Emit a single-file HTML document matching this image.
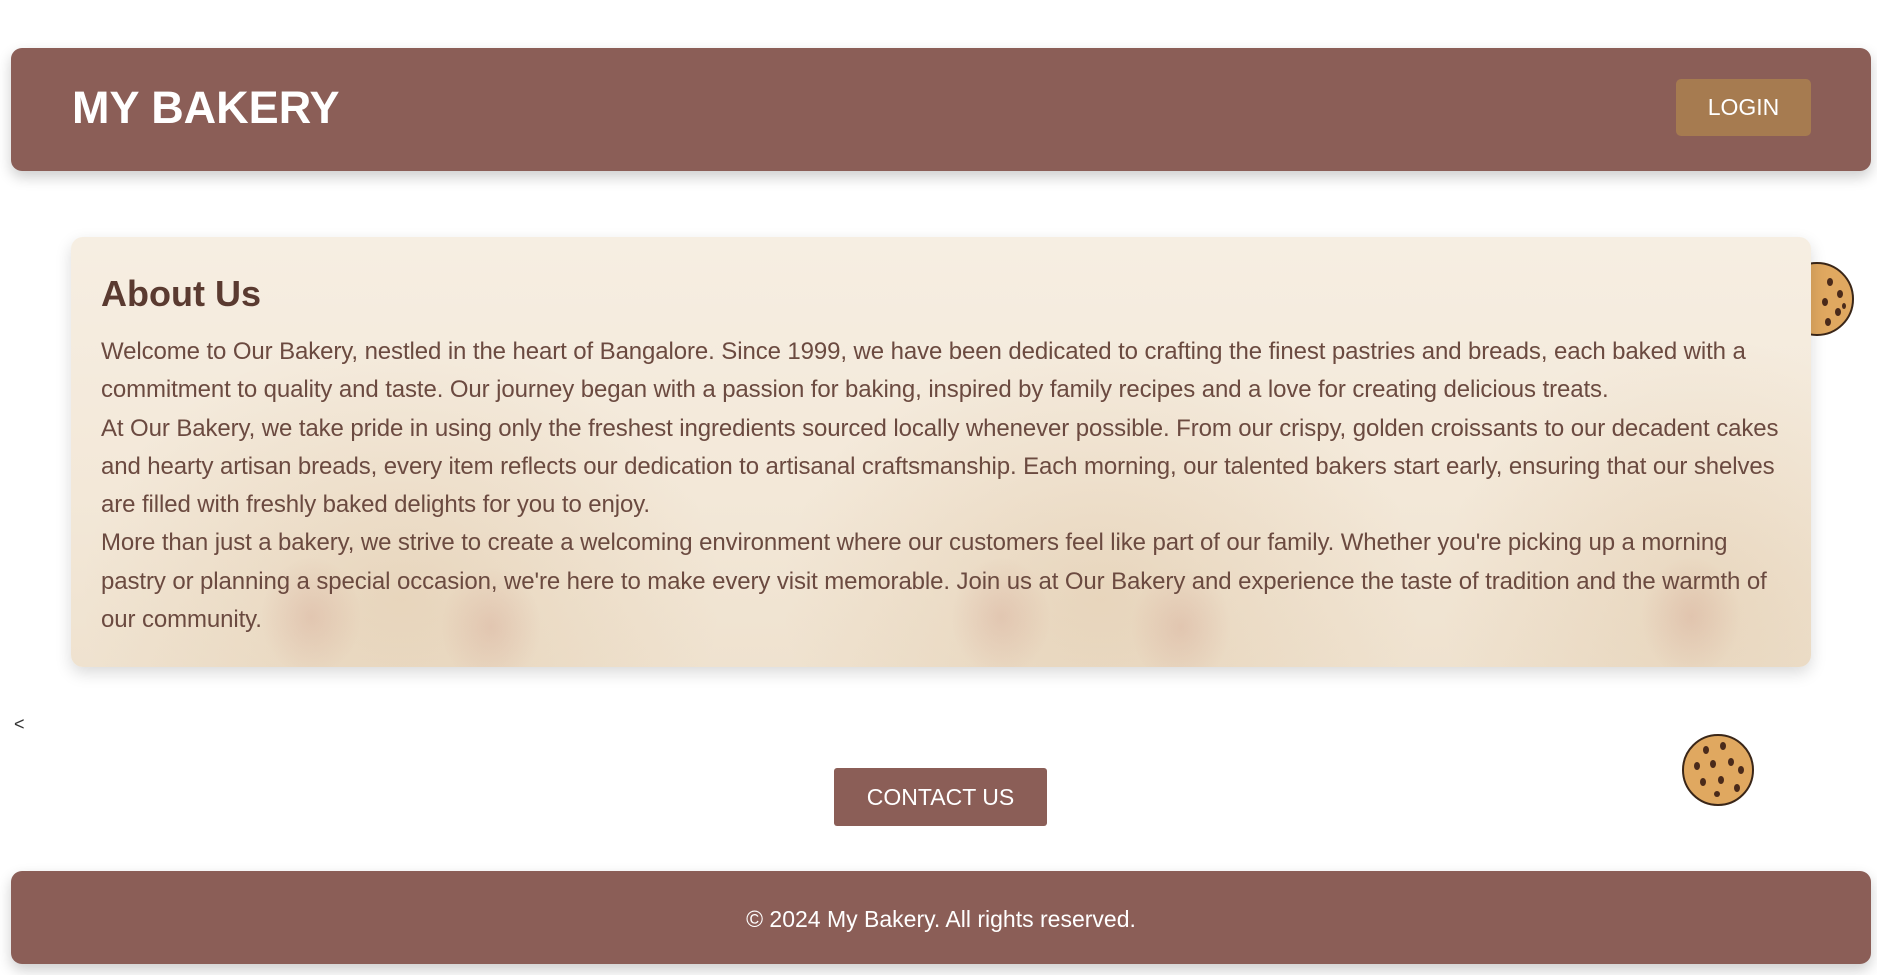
<!DOCTYPE html>
<html><head><meta charset="utf-8"><style>
*{margin:0;padding:0;box-sizing:border-box}
body{width:1877px;height:975px;background:#fff;position:relative;overflow:hidden;font-family:"Liberation Sans",sans-serif}
.header{position:absolute;left:11px;top:48px;width:1860px;height:123px;background:#8b5e57;border-radius:11px;box-shadow:0 6px 14px rgba(0,0,0,.2)}
.header h1{position:absolute;left:61px;top:34px;color:#fff;font-size:45px;font-weight:bold}
.login{position:absolute;left:1665px;top:31px;width:135px;height:57px;background:#a67b50;border-radius:5px;color:#fff;font-size:23px;text-align:center;line-height:57px}
.card{position:absolute;left:71px;top:237px;width:1740px;height:430px;border-radius:12px;box-shadow:0 6px 16px rgba(0,0,0,.15);overflow:hidden;
background:
radial-gradient(ellipse 50px 60px at 240px 380px,rgba(170,70,60,.13),transparent),
radial-gradient(ellipse 50px 60px at 420px 390px,rgba(170,70,60,.13),transparent),
radial-gradient(ellipse 50px 60px at 930px 380px,rgba(170,70,60,.13),transparent),
radial-gradient(ellipse 50px 60px at 1110px 390px,rgba(170,70,60,.13),transparent),
radial-gradient(ellipse 50px 60px at 1620px 380px,rgba(170,70,60,.13),transparent),
radial-gradient(ellipse 320px 260px at 330px 360px,rgba(200,160,110,.22),transparent),
radial-gradient(ellipse 320px 260px at 1030px 360px,rgba(200,160,110,.22),transparent),
radial-gradient(ellipse 260px 260px at 1630px 360px,rgba(200,160,110,.2),transparent),
linear-gradient(#f6eee2,#f3e8d8 60%,#efe2cf)}
.card h2{position:absolute;left:30px;top:36px;font-size:36px;font-weight:bold;color:#5a3a30}
.card p{position:absolute;left:30px;top:96px;font-size:24px;line-height:38.3px;color:#6b4a40;white-space:nowrap;letter-spacing:-0.1px}
.lt{position:absolute;left:14px;top:714px;font-size:18px;color:#333}
.contact{position:absolute;left:834px;top:768px;width:213px;height:58px;background:#8b5e57;border-radius:3px;color:#fff;font-size:23px;text-align:center;line-height:58px}
.footer{position:absolute;left:11px;top:871px;width:1860px;height:93px;background:#8b5e57;border-radius:11px;box-shadow:0 6px 14px rgba(0,0,0,.2);color:#fff;font-size:23px;text-align:center;line-height:96px}
svg{position:absolute}
</style></head><body>
<svg style="left:1780px;top:262px" width="76" height="76" viewBox="0 0 76 76"><circle cx="37" cy="37" r="36" fill="#e0a860" stroke="#3a2618" stroke-width="2"/><g fill="#4a2a1a"><ellipse cx="50" cy="20" rx="3" ry="4"/><ellipse cx="60" cy="32" rx="3" ry="4"/><ellipse cx="45" cy="40" rx="3" ry="4"/><ellipse cx="58" cy="50" rx="3" ry="4"/><ellipse cx="48" cy="60" rx="3" ry="4"/><ellipse cx="64" cy="44" rx="2" ry="3"/></g></svg>
<div class="header"><h1>MY BAKERY</h1><div class="login">LOGIN</div></div>
<div class="card"><h2>About Us</h2><p>Welcome to Our Bakery, nestled in the heart of Bangalore. Since 1999, we have been dedicated to crafting the finest pastries and breads, each baked with a<br>commitment to quality and taste. Our journey began with a passion for baking, inspired by family recipes and a love for creating delicious treats.<br>At Our Bakery, we take pride in using only the freshest ingredients sourced locally whenever possible. From our crispy, golden croissants to our decadent cakes<br>and hearty artisan breads, every item reflects our dedication to artisanal craftsmanship. Each morning, our talented bakers start early, ensuring that our shelves<br>are filled with freshly baked delights for you to enjoy.<br>More than just a bakery, we strive to create a welcoming environment where our customers feel like part of our family. Whether you're picking up a morning<br>pastry or planning a special occasion, we're here to make every visit memorable. Join us at Our Bakery and experience the taste of tradition and the warmth of<br>our community.</p></div>
<div class="lt">&lt;</div>
<div class="contact">CONTACT US</div>
<svg style="left:1681px;top:732px" width="76" height="76" viewBox="0 0 76 76"><circle cx="37" cy="38" r="35" fill="#e0a860" stroke="#3a2618" stroke-width="2"/><g fill="#4a2a1a"><ellipse cx="25" cy="18" rx="3" ry="4"/><ellipse cx="42" cy="14" rx="3" ry="4"/><ellipse cx="16" cy="34" rx="3" ry="4"/><ellipse cx="32" cy="32" rx="3" ry="4"/><ellipse cx="50" cy="30" rx="3" ry="4"/><ellipse cx="60" cy="38" rx="3" ry="4"/><ellipse cx="22" cy="50" rx="3" ry="4"/><ellipse cx="40" cy="48" rx="3" ry="4"/><ellipse cx="56" cy="56" rx="3" ry="4"/><ellipse cx="36" cy="62" rx="3" ry="3"/></g></svg>
<div class="footer">© 2024 My Bakery. All rights reserved.</div>
</body></html>
